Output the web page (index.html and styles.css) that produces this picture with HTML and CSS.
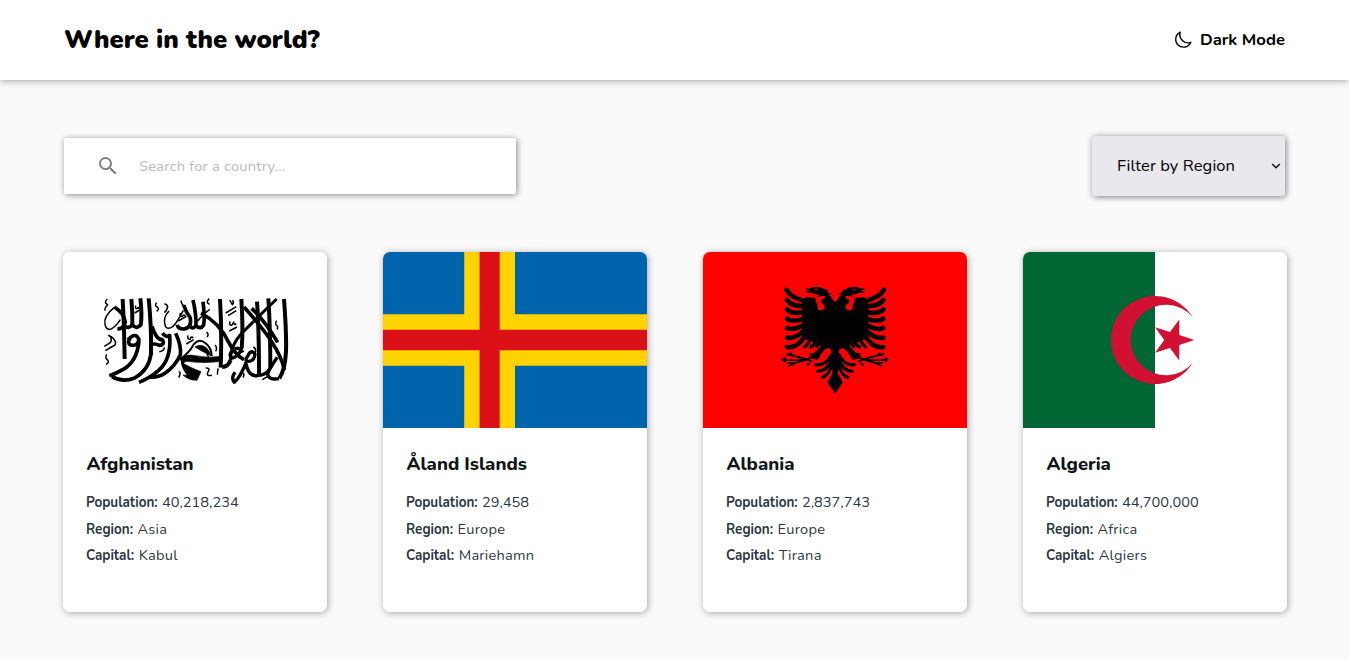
FILE: index.html
```html
<!DOCTYPE html>
<html lang="en">
<head>
<meta charset="utf-8">
<title>Where in the world?</title>
<link rel="stylesheet" href="styles.css">
</head>
<body>
<header class="header">
  <h1 class="title">Where in the world?</h1>
  <button class="mode" type="button">
    <svg class="moon" viewBox="0 0 20 20"><path d="M7.2 2.1A7.9 7.9 0 1 0 17.9 12.3A8.3 8.3 0 0 1 7.2 2.1Z"/></svg>
    <span>Dark Mode</span>
  </button>
</header>
<main class="main">
  <div class="controls">
    <label class="search">
      <svg class="glass" viewBox="0 0 24 24"><path d="M15.5 14h-.79l-.28-.27A6.47 6.47 0 0 0 16 9.5 6.5 6.5 0 1 0 9.5 16c1.61 0 3.09-.59 4.23-1.57l.27.28v.79l5 4.99L20.49 19zm-6 0C7.01 14 5 11.99 5 9.5S7.01 5 9.5 5 14 7.01 14 9.5 11.99 14 9.5 14"/></svg>
      <span class="placeholder">Search for a country...</span>
    </label>
    <div class="filter">
      <span>Filter by Region</span>
      <svg class="chevron" viewBox="0 0 10 10"><path d="M1.2 3 5 6.8 8.8 3"/></svg>
    </div>
  </div>
  <section class="grid">
    <article class="card">
      <svg class="flag" viewBox="0 0 264 176">
        <rect width="264" height="176" fill="#fff"/>
        <g class="ink" transform="translate(32 33) scale(.33333)">
          <g stroke-width="12">
            <path d="M83 42Q88 130 89 222M109 42Q113 82 112 122M136 40Q142 90 137 122M161 40Q170 130 168 210"/>
            <path d="M375 42Q381 140 377 248M439 42Q445 130 440 190M486 50Q492 130 492 270M520 40Q526 130 526 248M567 42Q575 150 573 200Q570 255 553 280"/>
            <path stroke-width="9" d="M545 42Q500 85 455 130Q405 175 407 225"/>
            <path stroke-width="11" d="M318 84Q375 115 400 170Q420 210 447 224M447 66Q500 125 530 170Q561 217 568 255M470 70Q510 108 548 172"/>
          </g>
          <g stroke-width="11">
            <path d="M58 66Q87 84 91 111Q86 132 67 132M112 119Q100 134 89 122M137 120Q125 134 112 120"/>
            <path d="M266 60Q273 82 286 99Q291 129 266 132Q249 132 247 119M294 45Q304 89 303 119Q297 135 284 124M324 50Q330 100 326 120Q317 135 303 122"/>
            <path d="M99 164Q122 139 132 164Q127 185 107 180Q95 174 106 158M132 168Q126 231 83 254Q65 265 43 272"/>
            <path d="M168 206Q162 254 119 279Q83 294 51 275M171 124Q184 165 202 164Q211 179 193 181Q181 175 169 178"/>
            <path d="M202 145Q216 160 224 151Q230 223 190 257Q165 279 132 292M242 145Q260 184 256 210Q240 244 211 264Q190 278 166 276"/>
          </g>
          <path stroke-width="6" d="M256 222Q284 202 296 178Q312 158 332 175Q350 190 350 213M260 230Q264 254 280 270"/>
          <path fill="#000" stroke-width="2" d="M300 186Q318 174 336 190Q344 200 348 212Q318 198 300 186ZM256 222Q272 206 300 212Q340 220 381 214V229Q325 236 276 229Q268 228 266 236Q290 250 318 260L306 286Q280 286 264 270Q274 272 280 268Q262 248 256 222Z"/>
          <path stroke-width="12" d="M407 225Q399 246 382 246"/>
          <path stroke-width="10" d="M440 188Q432 217 410 219Q399 209 414 196Q430 181 444 202M459 211Q470 191 480 208Q477 232 456 229Q449 225 460 211M455 229Q435 278 418 292Q407 280 420 262M452 230Q459 276 488 272Q515 271 527 247M547 217Q525 248 518 266Q519 286 552 281"/>
          <g stroke-width="4.5">
            <path d="M37 42Q25 52 38 59Q28 69 30 77M58 67Q24 94 30 119Q33 135 47 133Q62 126 76 104M40 150Q53 157 47 172L28 184M48 154Q66 168 60 180Q44 189 31 197M35 208Q29 220 39 226Q43 233 33 238"/>
            <path d="M122 62Q120 74 127 70Q130 64 132 72M119 84L134 75M185 53Q177 63 187 66Q194 72 185 79M208 57Q217 57 218 66Q216 76 208 83M222 78Q202 98 211 124Q218 136 234 124Q246 113 265 76M258 47Q260 61 270 64"/>
            <path d="M256 84Q253 97 263 94Q265 86 271 93M250 108L274 94M279 151Q276 165 286 162Q288 152 295 159M274 177L296 164M198 185L209 172M193 200Q208 198 208 187M343 41Q330 52 344 58M308 108Q322 88 344 73M404 45L412 59Q418 54 413 45M392 84L424 65M399 92L424 77"/>
            <path d="M405 109Q402 124 411 120L416 111Q417 122 424 116M403 138L426 126M360 180Q368 188 362 199M251 260Q260 261 251 278M332 249Q347 248 339 261Q332 275 351 271M369 250L367 269M443 264Q450 267 444 278M335 207Q344 214 338 229M545 107Q538 119 548 124L547 134M475 186Q486 192 480 204M502 284L518 274M335 141Q343 149 336 156"/>
          </g>
        </g>
      </svg>
      <div class="body"><h2 class="name">Afghanistan</h2>
        <p class="row"><b>Population:</b> <span>40,218,234</span></p><p class="row"><b>Region:</b> <span>Asia</span></p><p class="row"><b>Capital:</b> <span>Kabul</span></p></div>
    </article>
    <article class="card">
      <svg class="flag" viewBox="0 0 264 176">
        <rect width="264" height="176" fill="#0064ad"/>
        <path fill="#ffd300" d="M81.2 0H132V176H81.2ZM0 62.2H264V113.8H0Z"/>
        <path fill="#db0f16" d="M96.6 0H116.7V176H96.6ZM0 77.7H264V98.3H0Z"/>
      </svg>
      <div class="body"><h2 class="name">Åland Islands</h2>
        <p class="row"><b>Population:</b> <span>29,458</span></p><p class="row"><b>Region:</b> <span>Europe</span></p><p class="row"><b>Capital:</b> <span>Mariehamn</span></p></div>
    </article>
    <article class="card">
      <svg class="flag" viewBox="0 0 264 176">
        <rect width="264" height="176" fill="#f00"/>
        <defs>
          <g id="wing">
            <path d="M196 82L187 72Q184 62 176 60L184 56L173 52Q176 44 164 43Q146 30 124 38L117 41Q107 37 107 43L118 47L103 49Q113 55 125 54Q135 60 150 59Q143 65 130 68L96 65V184L104 192L180 222Q187 228 186 245Q187 280 187 296L172 322L196 356Z"/>
            <path class="feather" d="M49 44Q63 68 100 76M51 75Q66 95 101 93M51 103Q66 119 102 111M51 131Q67 144 102 130M51 159Q68 168 102 149M51 188Q74 193 101 168M51 216Q82 222 107 180"/>
            <path class="quill" d="M104 216Q118 206 122 186M122 216Q136 209 138 189M140 214Q150 206 151 192M184 239Q166 273 138 269M185 253Q172 288 144 289M186 268Q177 301 158 307"/>
            <path d="M160 197L179 220Q158 222 147 250Q145 258 130 251L115 249L123 241L116 236L133 233L150 216Z"/>
            <path class="claw" d="M130 246Q93 260 38 254M125 258Q85 245 56 239M112 254Q80 260 57 273M70 242L61 234M72 264L54 264M45 249L38 254L45 260M54 240L51 235M112 270L119 264"/>
            <path fill="#f00" d="M132 69Q145 62 161 63Q168 64 163 70Q148 75 155 84Q166 91 165 99Q160 107 149 106Q142 104 143 94Q144 84 137 80Q143 75 132 69Z"/>
            <path fill="#f00" d="M178 220Q170 219 159 232Q145 248 151 259Q163 264 172 247Q181 231 178 220Z"/>
            <path fill="#f00" d="M130 44L145 43L139 47ZM96 65L109 67L97 73Z"/>
          </g>
        </defs>
        <g transform="translate(67 23) scale(.33333)"><use href="#wing"/><use href="#wing" transform="translate(391 0) scale(-1 1)"/></g>
      </svg>
      <div class="body"><h2 class="name">Albania</h2>
        <p class="row"><b>Population:</b> <span>2,837,743</span></p><p class="row"><b>Region:</b> <span>Europe</span></p><p class="row"><b>Capital:</b> <span>Tirana</span></p></div>
    </article>
    <article class="card">
      <svg class="flag" viewBox="0 0 264 176">
        <rect width="264" height="176" fill="#fff"/><path fill="#063" d="M0 0H132V176H0Z"/>
        <path fill="#d21034" d="M169.6 65A44 44 0 1 0 169.6 111A35.2 35.2 0 1 1 169.6 65Z"/>
        <path fill="#d21034" d="M171.3 88L156.3 92.9V108.6L147 95.9L132 100.8L141.3 88L132 75.2L147 80.1L156.3 67.4V83.1Z"/>
      </svg>
      <div class="body"><h2 class="name">Algeria</h2>
        <p class="row"><b>Population:</b> <span>44,700,000</span></p><p class="row"><b>Region:</b> <span>Africa</span></p><p class="row"><b>Capital:</b> <span>Algiers</span></p></div>
    </article>
  </section>
</main>
</body>
</html>
```
FILE: styles.css
```css
* { box-sizing: border-box; }
body { margin: 0; height: 660px; overflow: hidden; background: #fafafa; color: #000; font-family: Nunito, "Open Sans", sans-serif; }
h1, h2, p { margin: 0; }
.header { display: flex; align-items: center; justify-content: space-between; height: 80px; padding: 0 64px; background: #fff; box-shadow: 0 1px 7px rgba(0,0,0,.35); }
.title { font-size: 25.6px; font-weight: 900; line-height: 32px; white-space: nowrap; }
.mode { display: flex; align-items: center; gap: 7px; padding: 0; border: 0; background: none; color: #000; font: 700 16.7px/24px Nunito, "Open Sans", sans-serif; }
.moon { width: 20px; height: 20px; fill: none; stroke: #000; stroke-width: 1.4; stroke-linejoin: round; }
.main { padding: 56px 62px 0 63px; }
.controls { display: flex; align-items: center; justify-content: space-between; height: 60px; padding: 0 1px; }
.search { display: flex; align-items: center; gap: 19px; width: 452px; height: 56px; padding-left: 32px; background: #fff; border-radius: 2px; box-shadow: 1px 1px 6px rgba(0,0,0,.45); }
.glass { width: 24px; height: 24px; fill: #808080; }
.placeholder { color: #bababa; font-size: 14.8px; line-height: 20px; letter-spacing: .17px; white-space: nowrap; }
.filter { display: flex; align-items: center; justify-content: space-between; width: 193px; height: 60px; margin-right: 1px; padding: 0 4px 0 25px; background: #e9e8ed; border-radius: 3px; box-shadow: 1px 1px 6px rgba(0,0,0,.5); font-size: 16.5px; line-height: 22px; letter-spacing: .1px; white-space: nowrap; }
.chevron { width: 10px; height: 10px; fill: none; stroke: #111; stroke-width: 1.5; }
.grid { display: grid; grid-template-columns: repeat(4, 264px); gap: 56px; margin-top: 56px; }
.card { height: 360px; overflow: hidden; background: #fff; border-radius: 7px; box-shadow: 1px 1px 7px rgba(0,0,0,.35); }
.flag { display: block; width: 264px; height: 176px; }
.ink { fill: none; stroke: #000; stroke-linejoin: round; }
.feather, .quill, .claw { fill: none; stroke: #000; stroke-width: 14; stroke-linecap: round; }
.quill { stroke-width: 10; }
.claw { stroke-width: 5; }
.body { padding: 24px 24px 0 23.5px; }
.name { margin-bottom: 13px; color: #111517; font-size: 18.5px; font-weight: 800; line-height: 24px; }
.row { display: flex; gap: 4px; height: 26.5px; color: #2b3945; font-size: 14.6px; font-weight: 400; line-height: 26px; white-space: nowrap; }
.row + .row span { letter-spacing: .25px; }
.row b { margin-left: -.4px; margin-right: -4.9px; font-size: 15px; font-weight: 700; transform: scaleX(.9); transform-origin: left; }
.row:first-of-type b { margin-right: -7.8px; }
```
